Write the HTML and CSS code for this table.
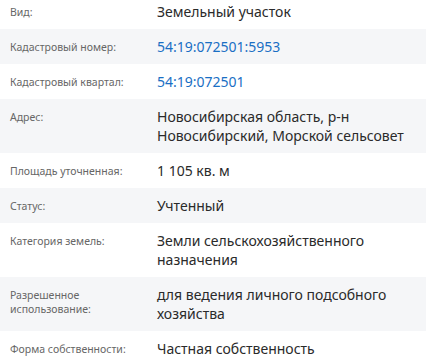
FILE: index.html
```html
<!DOCTYPE html>
<html lang="ru">
<head>
<meta charset="utf-8">
<link rel="stylesheet" href="styles.css">
</head>
<body>
<div class="list">
  <div class="row"><div class="label">Вид:</div><div class="value">Земельный участок</div></div>
  <div class="row alt"><div class="label">Кадастровый номер:</div><div class="value"><a class="link" href="#">54:19:072501:5953</a></div></div>
  <div class="row"><div class="label">Кадастровый квартал:</div><div class="value"><a class="link" href="#">54:19:072501</a></div></div>
  <div class="row alt"><div class="label">Адрес:</div><div class="value">Новосибирская область, р-н Новосибирский, Морской сельсовет</div></div>
  <div class="row"><div class="label">Площадь уточненная:</div><div class="value">1 105 кв. м</div></div>
  <div class="row alt"><div class="label">Статус:</div><div class="value">Учтенный</div></div>
  <div class="row"><div class="label">Категория земель:</div><div class="value">Земли сельскохозяйственного назначения</div></div>
  <div class="row alt"><div class="label">Разрешенное использование:</div><div class="value">для ведения личного подсобного хозяйства</div></div>
  <div class="row"><div class="label">Форма собственности:</div><div class="value">Частная собственность</div></div>
</div>
</body>
</html>
```
FILE: styles.css
```css
html, body {
  margin: 0;
  padding: 0;
  background: #ffffff;
}
body {
  font-family: "Noto Sans", "Open Sans", sans-serif;
  color: #2a2a2a;
  overflow: hidden;
}
.list {
  margin-top: -6px;
}
.row {
  display: flex;
  align-items: flex-start;
  padding: 8px 0;
}
.row.alt {
  background: #f5f6f8;
}
.label {
  width: 157px;
  flex: none;
  padding-left: 10px;
  box-sizing: border-box;
  font-size: 10.5px;
  line-height: 14px;
  color: #666;
  padding-top: 3px;
  padding-right: 8px;
}
.value {
  flex: 1;
  font-size: 14px;
  line-height: 19px;
  padding-right: 10px;
}
.link {
  color: #1a6fc4;
  text-decoration: none;
}
```
